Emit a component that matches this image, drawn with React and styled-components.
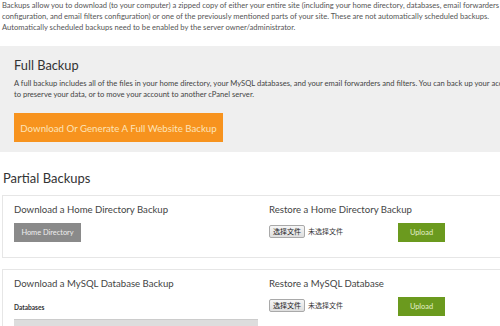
import React from "react";
import styled, { createGlobalStyle } from "styled-components";

const GlobalStyle = createGlobalStyle`
  html, body {
    margin: 0;
    padding: 0;
    background: #ffffff;
    overflow: hidden;
  }
  body {
    font-family: Lato, "Liberation Sans", "Noto Sans CJK SC", sans-serif;
    color: #444444;
  }
`;

const Page = styled.div`
  width: 500px;
  overflow: hidden;
`;

const Intro = styled.p`
  margin: 0;
  padding: 0 0 0 2px;
  font-size: 7.6px;
  line-height: 11px;
  color: #555555;
  white-space: nowrap;
`;

const FullPanel = styled.section`
  margin-top: 13px;
  background-color: #efefef;
  padding: 9px 14px 10px;
`;

const PanelTitle = styled.h2`
  margin: 0;
  font-size: 12.8px;
  font-weight: normal;
  line-height: 20px;
  color: #333333;
`;

const PanelText = styled.p`
  margin: 3px 0 0;
  font-size: 7.6px;
  line-height: 11px;
  color: #444444;
  white-space: nowrap;
`;

const OrangeButton = styled.button`
  margin-top: 13px;
  width: 209px;
  height: 29px;
  border: none;
  padding: 0;
  background-color: #f7931e;
  color: #fde3b8;
  font-family: inherit;
  font-size: 9.7px;
  white-space: nowrap;
`;

const SectionTitle = styled.h2`
  margin: 15px 0 0 3px;
  font-size: 13px;
  font-weight: normal;
  line-height: 22px;
  color: #333333;
`;

const Card = styled.div`
  margin: ${(p) => p.$top}px 0 0 2px;
  width: 520px;
  border: 1px solid #e6e6e6;
  border-right: none;
  height: ${(p) => p.$height}px;
  padding: 6px 0 0 11px;
  display: grid;
  grid-template-columns: 244px 1fr;
  column-gap: 11px;
  box-sizing: border-box;
`;

const Column = styled.div`
  display: flex;
  flex-direction: column;
  align-items: flex-start;
`;

const CardTitle = styled.h3`
  margin: 0;
  font-size: 9.6px;
  font-weight: normal;
  line-height: 16px;
  color: #444444;
  white-space: nowrap;
`;

const GrayButton = styled.button`
  margin-top: 5px;
  width: 67px;
  height: 19px;
  border: none;
  padding: 0;
  background-color: #8a8a8a;
  color: #eeeeee;
  font-family: inherit;
  font-size: 7.4px;
`;

const UploadRow = styled.div`
  margin-top: 5px;
  display: flex;
  align-items: center;
`;

const FileGroup = styled.div`
  width: 129px;
  display: flex;
  align-items: center;
  gap: 3px;
  font-size: 7px;
  color: #333333;
  margin-top: -3px;
`;

const FileButton = styled.span`
  display: inline-block;
  padding: 1px 3px;
  border: 1px solid #a9a9a9;
  border-radius: 2px;
  background: linear-gradient(#f6f6f6, #dedede);
  font-size: 7px;
  line-height: 9px;
  color: #222222;
`;

const GreenButton = styled.button`
  width: 47px;
  height: 19px;
  border: none;
  padding: 0;
  background-color: #6b9a1e;
  color: #e4f0c8;
  font-family: inherit;
  font-size: 7.4px;
`;

const TableLabel = styled.div`
  margin-top: 11px;
  font-size: 6.6px;
  font-weight: bold;
  color: #333333;
`;

const TableHead = styled.div`
  margin-top: 8px;
  width: 244px;
  height: 12px;
  background-color: #dddddd;
  border-top: 1px solid #cccccc;
`;

const Restore = ({ title }) => (
  <Column>
    <CardTitle>{title}</CardTitle>
    <UploadRow>
      <FileGroup>
        <FileButton>选择文件</FileButton>
        <span>未选择文件</span>
      </FileGroup>
      <GreenButton>Upload</GreenButton>
    </UploadRow>
  </Column>
);

export default function App() {
  return (
    <Page>
      <GlobalStyle />
      <Intro>
        Backups allow you to download (to your computer) a zipped copy of either your entire site (including your home directory, databases, email forwarders
        <br />
        configuration, and email filters configuration) or one of the previously mentioned parts of your site. These are not automatically scheduled backups.
        <br />
        Automatically scheduled backups need to be enabled by the server owner/administrator.
      </Intro>
      <FullPanel>
        <PanelTitle>Full Backup</PanelTitle>
        <PanelText>
          A full backup includes all of the files in your home directory, your MySQL databases, and your email forwarders and filters. You can back up your account
          <br />
          to preserve your data, or to move your account to another cPanel server.
        </PanelText>
        <OrangeButton>Download Or Generate A Full Website Backup</OrangeButton>
      </FullPanel>
      <SectionTitle>Partial Backups</SectionTitle>
      <Card $top={6} $height={63}>
        <Column>
          <CardTitle>Download a Home Directory Backup</CardTitle>
          <GrayButton>Home Directory</GrayButton>
        </Column>
        <Restore title="Restore a Home Directory Backup" />
      </Card>
      <Card $top={11} $height={80}>
        <Column>
          <CardTitle>Download a MySQL Database Backup</CardTitle>
          <TableLabel>Databases</TableLabel>
          <TableHead />
        </Column>
        <Restore title="Restore a MySQL Database" />
      </Card>
    </Page>
  );
}
